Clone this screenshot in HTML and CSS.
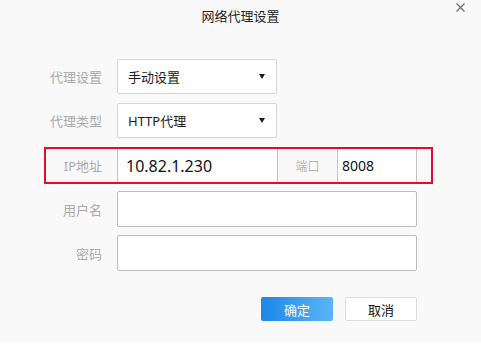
FILE: index.html
```html
<!DOCTYPE html>
<html lang="zh-CN">
<head>
    <meta charset="UTF-8">
    <meta name="viewport" content="width=device-width, initial-scale=1.0">
    <title>网络代理设置</title>
    <link rel="stylesheet" href="styles.css">
</head>
<body>
    <div class="dialog">
        <div class="title-bar">
            <span></span>
            <h1 class="title">网络代理设置</h1>
            <span class="close">
                <svg width="9" height="9" viewBox="0 0 9 9"><path d="M0.5 0.5 L8.5 8.5 M8.5 0.5 L0.5 8.5" stroke="#6b7078" stroke-width="1.3" fill="none"/></svg>
            </span>
        </div>
        <div class="form">
            <div class="row">
                <span class="label">代理设置</span>
                <div class="select"><span>手动设置</span><span class="caret"></span></div>
            </div>
            <div class="row">
                <span class="label">代理类型</span>
                <div class="select"><span>HTTP代理</span><span class="caret"></span></div>
            </div>
            <!-- 红框：IP 和端口 -->
            <div class="row highlight">
                <span class="label">IP地址</span>
                <input class="ip-input" type="text" value="10.82.1.230">
                <span class="port-label">端口</span>
                <input class="port-input" type="text" value="8008">
            </div>
            <div class="row tall">
                <span class="label">用户名</span>
                <input class="text-input" type="text">
            </div>
            <div class="row tall">
                <span class="label">密码</span>
                <input class="text-input" type="password">
            </div>
        </div>
        <div class="buttons">
            <button class="btn btn-ok">确定</button>
            <button class="btn btn-cancel">取消</button>
        </div>
    </div>
</body>
</html>
```

FILE: styles.css
```css
body {
    margin: 0;
    padding: 0;
    background-color: #fff;
    font-family: "Noto Sans", "Noto Sans CJK SC", sans-serif;
}
.dialog {
    width: 481px;
    height: 342px;
    background-color: #f9f9f9;
}
.title-bar {
    height: 30px;
    display: grid;
    grid-template-columns: 1fr auto 1fr;
    align-items: center;
}
.title {
    margin: 0;
    font-size: 13px;
    font-weight: normal;
    color: #1f1f1f;
}
.close {
    justify-self: end;
    align-self: start;
    margin-top: 3px;
    margin-right: 16px;
    display: flex;
    cursor: pointer;
}
.form {
    padding-top: 29px;
    padding-bottom: 1px;
}
.row {
    display: flex;
    align-items: center;
    height: 35px;
    margin-left: 46px;
    margin-bottom: 9px;
}
.row.tall {
    height: 36px;
    margin-bottom: 8px;
}
.label {
    width: 56px;
    margin-right: 15px;
    text-align: right;
    font-size: 13px;
    color: #a9a9a9;
}
.select {
    box-sizing: border-box;
    width: 160px;
    height: 100%;
    padding: 0 11px 0 10px;
    display: flex;
    justify-content: space-between;
    align-items: center;
    background-color: #fff;
    border: 1px solid #d6d6d6;
    border-radius: 2px;
    font-size: 13px;
    color: #1a1a1a;
}
.caret {
    width: 0;
    height: 0;
    border-left: 3.5px solid transparent;
    border-right: 3.5px solid transparent;
    border-top: 5px solid #1a1a1a;
}
.row.highlight {
    box-sizing: border-box;
    width: 389px;
    height: 37px;
    margin-left: 44px;
    margin-bottom: 7px;
    border: 2px solid #ea0a2a;
}
input {
    font-family: "Noto Sans", "Noto Sans CJK SC", sans-serif;
    outline: none;
    margin: 0;
}
.ip-input {
    box-sizing: border-box;
    width: 161px;
    height: 100%;
    padding: 0 0 0 8px;
    border: none;
    border-left: 1px solid #c4c4c4;
    border-right: 1px solid #c4c4c4;
    background-color: #fff;
    font-size: 16px;
    color: #111;
}
.port-label {
    width: 59px;
    text-align: center;
    font-size: 12px;
    color: #b4b4b4;
}
.port-input {
    box-sizing: border-box;
    width: 80px;
    height: 100%;
    padding: 0 0 0 4px;
    border: none;
    border-left: 1px solid #c4c4c4;
    border-right: 1px solid #c4c4c4;
    background-color: #fff;
    font-size: 14px;
    color: #111;
}
.text-input {
    box-sizing: border-box;
    width: 300px;
    height: 100%;
    padding: 0 8px;
    border: 1px solid #bcbcbc;
    border-radius: 2px;
    background-color: #fff;
    font-size: 14px;
}
.buttons {
    display: flex;
    justify-content: flex-end;
    gap: 12px;
    padding-right: 64px;
    margin-top: 17px;
}
.btn {
    box-sizing: border-box;
    width: 72px;
    height: 24px;
    padding: 0;
    border-radius: 2px;
    font-family: "Noto Sans", "Noto Sans CJK SC", sans-serif;
    font-size: 13px;
    cursor: pointer;
}
.btn-ok {
    border: none;
    color: #fff;
    background: linear-gradient(to right, #1c87e6, #5bb6f7);
}
.btn-cancel {
    border: 1px solid #dcdcdc;
    color: #111;
    background-color: #fff;
}
```
